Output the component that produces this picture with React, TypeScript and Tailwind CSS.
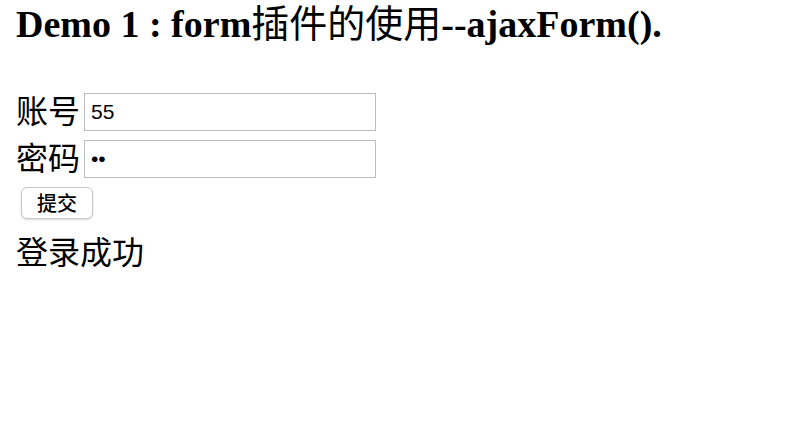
import React, { FC, useState } from "react";

const serif = "font-['Liberation_Serif','Noto_Sans_CJK_SC',serif]";

const App: FC = () => {
	const [user, setUser] = useState("55");
	const [pwd, setPwd] = useState("55");
	return (
		<div className={`w-[804px] h-[424px] bg-white text-black px-[16px] ${serif}`}>
			<h1 className="h-[88px] pt-[2px] text-[38px] leading-[44px] font-bold whitespace-nowrap">
				Demo 1 : form<span className="font-normal">插件的使用</span>--ajaxForm().
			</h1>
			<form className="flex flex-col" onSubmit={(e) => e.preventDefault()}>
				<div className="flex items-center h-[47px]">
					<label className="w-[68px] text-[32px] leading-[40px]">账号</label>
					<input
						className="w-[292px] h-[38px] border border-[#bdbdbd] px-[6px] text-[21px] font-['Liberation_Sans',sans-serif] outline-none"
						value={user}
						onChange={(e) => setUser(e.target.value)}
					/>
				</div>
				<div className="flex items-center h-[47px]">
					<label className="w-[68px] text-[32px] leading-[40px]">密码</label>
					<input
						type="password"
						className="w-[292px] h-[38px] border border-[#bdbdbd] px-[6px] text-[21px] font-['Liberation_Sans',sans-serif] outline-none"
						value={pwd}
						onChange={(e) => setPwd(e.target.value)}
					/>
				</div>
				<div className="mt-[5px] pl-[5px]">
					<button
						type="submit"
						className="w-[72px] h-[32px] rounded-[6px] border border-[#c8c8c8] bg-white shadow-[0_1px_2px_rgba(0,0,0,0.15)] text-[20px] leading-[30px] font-['Noto_Sans_CJK_SC',sans-serif] font-medium"
					>
						提交
					</button>
				</div>
				<div className="mt-[14px] text-[32px] leading-[40px]">登录成功</div>
			</form>
		</div>
	);
};

export default App;
